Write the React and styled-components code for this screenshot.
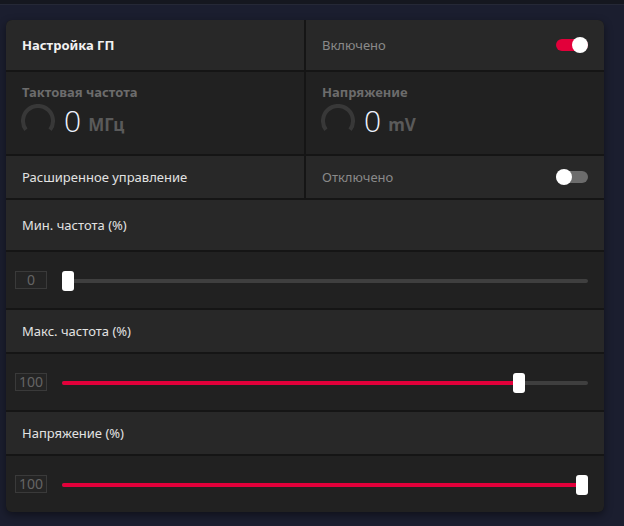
import React from 'react';
import styled, {createGlobalStyle} from 'styled-components';

const GlobalStyle = createGlobalStyle`
  html, body {
    margin: 0;
    padding: 0;
    background: #1b1e2f;
    font-family: "Noto Sans", "Open Sans", sans-serif;
    font-size: 13px;
  }
`;

const RED = '#e2003a';

const Page = styled.div`
  min-height: 526px;
  background: #1b1e2f;
`;

const TopStrip = styled.div`
  height: 4px;
  background: #15171f;
  border-bottom: 1px solid #252836;
`;

const Panel = styled.div`
  margin: 15px 0 0 6px;
  width: 598px;
  display: grid;
  grid-template-columns: 1fr 1fr;
  grid-template-rows: 50px 82px 42px 50px 56px 42px 56px 42px 56px;
  gap: 2px;
  background: #151515;
  border-radius: 6px;
  overflow: hidden;
  box-shadow: 0 3px 8px rgba(0, 0, 0, 0.45);
`;

const Cell = styled.div`
  grid-column: ${p => p.$wide ? '1 / span 2' : 'auto'};
  background: ${p => p.$dark ? '#212121' : '#282828'};
  display: flex;
  align-items: center;
  justify-content: space-between;
  padding: 0 16px;
  box-sizing: border-box;
`;

const StatCell = styled(Cell)`
  flex-direction: column;
  align-items: flex-start;
  justify-content: flex-start;
  padding-top: 11px;
`;

const Title = styled.span`
  font-weight: 700;
  color: #f2f2f2;
`;

const Label = styled.span`
  color: #e2e2e2;
`;

const State = styled.span`
  color: #8a8a8a;
`;

const StatTitle = styled.span`
  font-weight: 700;
  color: #6c6c6c;
  line-height: 18px;
`;

const StatRow = styled.div`
  display: flex;
  align-items: center;
  gap: 7px;
  margin-top: 2px;
  margin-left: -1px;
`;

const BigValue = styled.span`
  font-family: "Open Sans", "Noto Sans", sans-serif;
  font-weight: 300;
  font-size: 30px;
  color: #eef4ff;
  margin-left: 2px;
  line-height: 36px;
`;

const Unit = styled.span`
  font-weight: 700;
  font-size: 17px;
  color: #5a5a5a;
  margin-top: 6px;
`;

const ToggleTrack = styled.div`
  position: relative;
  width: 32px;
  height: 12px;
  border-radius: 6px;
  background: ${p => p.$on ? RED : '#6c6c6c'};
`;

const ToggleKnob = styled.div`
  position: absolute;
  top: -2px;
  left: ${p => p.$on ? '16px' : '0'};
  width: 16px;
  height: 16px;
  border-radius: 50%;
  background: #fff;
`;

const SliderCell = styled(Cell)`
  justify-content: flex-start;
  padding: 0 16px 0 9px;
  gap: 15px;
`;

const ValueBox = styled.div`
  width: 32px;
  height: 18px;
  box-sizing: border-box;
  border: 1px solid #3a3a3a;
  background: #242424;
  color: #646464;
  font-size: 14px;
  display: flex;
  align-items: center;
  justify-content: center;
  line-height: 1;
`;

const SliderArea = styled.div`
  position: relative;
  flex: 1;
  height: 20px;
  margin-top: 2px;
`;

const Rail = styled.div`
  position: absolute;
  left: 0;
  right: 0;
  top: 8px;
  height: 4px;
  border-radius: 2px;
  background: #3f3f3f;
`;

const Fill = styled.div`
  position: absolute;
  left: 0;
  top: 8px;
  height: 4px;
  border-radius: 2px;
  background: ${RED};
`;

const Thumb = styled.div`
  position: absolute;
  top: 0;
  width: 12px;
  height: 20px;
  border-radius: 3px;
  background: #fff;
`;

const Gauge = () => (
  <svg width="34" height="34" viewBox="0 0 34 34">
    <path d="M 4.9 25.8 A 15 15 0 1 1 29.1 25.8" fill="none" stroke="#383838" strokeWidth="4"/>
  </svg>
);

const Toggle = ({on}) => (
  <ToggleTrack $on={on}>
    <ToggleKnob $on={on}/>
  </ToggleTrack>
);

const Slider = ({box, value}) => {
  const frac = value / 100;
  return <SliderCell $wide $dark>
    <ValueBox>{box}</ValueBox>
    <SliderArea>
      <Rail/>
      <Fill style={{width: `calc(${frac} * (100% - 12px) + 6px)`}}/>
      <Thumb style={{left: `calc(${frac} * (100% - 12px))`}}/>
    </SliderArea>
  </SliderCell>
};

const Stat = ({title, unit}) => (
  <StatCell $dark>
    <StatTitle>{title}</StatTitle>
    <StatRow>
      <Gauge/>
      <BigValue>0</BigValue>
      <Unit>{unit}</Unit>
    </StatRow>
  </StatCell>
);

const App = () => (
  <Page>
    <GlobalStyle/>
    <TopStrip/>
    <Panel>
      <Cell><Title>Настройка ГП</Title></Cell>
      <Cell><State>Включено</State><Toggle on/></Cell>
      <Stat title="Тактовая частота" unit="МГц"/>
      <Stat title="Напряжение" unit="mV"/>
      <Cell><Label>Расширенное управление</Label></Cell>
      <Cell><State>Отключено</State><Toggle/></Cell>
      <Cell $wide><Label>Мин. частота (%)</Label></Cell>
      <Slider box="0" value={0}/>
      <Cell $wide><Label>Макс. частота (%)</Label></Cell>
      <Slider box="100" value={87.8}/>
      <Cell $wide><Label>Напряжение (%)</Label></Cell>
      <Slider box="100" value={100}/>
    </Panel>
  </Page>
);

export default App;
